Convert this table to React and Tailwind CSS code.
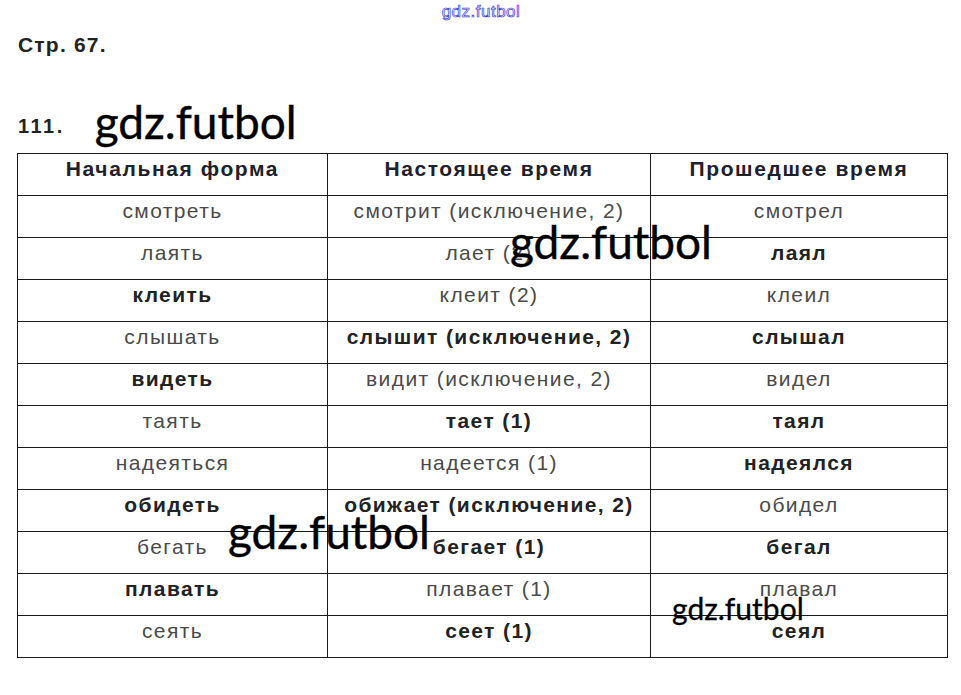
const rows = [
  [['смотреть', false], ['смотрит (исключение, 2)', false], ['смотрел', false]],
  [['лаять', false], ['лает (2)', false], ['лаял', true]],
  [['клеить', true], ['клеит (2)', false], ['клеил', false]],
  [['слышать', false], ['слышит (исключение, 2)', true], ['слышал', true]],
  [['видеть', true], ['видит (исключение, 2)', false], ['видел', false]],
  [['таять', false], ['тает (1)', true], ['таял', true]],
  [['надеяться', false], ['надеется (1)', false], ['надеялся', true]],
  [['обидеть', true], ['обижает (исключение, 2)', true], ['обидел', false]],
  [['бегать', false], ['бегает (1)', true], ['бегал', true]],
  [['плавать', true], ['плавает (1)', false], ['плавал', false]],
  [['сеять', false], ['сеет (1)', true], ['сеял', true]],
];

const heads = ['Начальная форма', 'Настоящее время', 'Прошедшее время'];

function Mark({ className }) {
  return (
    <span className={`absolute leading-none text-black font-['Lato',sans-serif] ${className}`}>
      gdz.futbol
    </span>
  );
}

export default function App() {
  return (
    <div className="relative w-[961px] h-[695px] bg-white font-['Liberation_Sans',Arial,sans-serif] overflow-hidden">
      <div className="flex justify-center pt-[3px]">
        <span className="ml-[1px] text-[17px] leading-none text-transparent [-webkit-text-stroke:0.7px_#3434d8] tracking-[0.5px]">
          gdz.futbol
        </span>
      </div>

      <div className="pl-[18px] pt-[14px] text-[21px] font-bold text-[#222] tracking-[1.2px] leading-none">
        Стр. 67.
      </div>

      <div className="flex items-end pl-[18px] h-[91px]">
        <span className="text-[20px] font-semibold text-[#222] tracking-[2.5px] leading-none mb-[10px]">111.</span>
        <span className="ml-[30px] text-[46px] leading-none text-black font-['Lato',sans-serif] mb-[1px] [-webkit-text-stroke:0.4px_#000]">
          gdz.futbol
        </span>
      </div>

      <table className="ml-[17px] mt-[7px] w-[930px] border-collapse table-fixed">
        <colgroup>
          <col className="w-[310px]" />
          <col className="w-[323px]" />
          <col className="w-[297px]" />
        </colgroup>
        <thead>
          <tr>
            {heads.map((h) => (
              <th
                key={h}
                className="h-[42px] border border-[#1a1a1a] align-top pt-[2px] text-[21px] leading-[25px] font-bold text-[#20202a] tracking-[1.6px]"
              >
                {h}
              </th>
            ))}
          </tr>
        </thead>
        <tbody>
          {rows.map((r, i) => (
            <tr key={i}>
              {r.map(([t, b], j) => (
                <td
                  key={j}
                  className={`h-[42px] border border-[#1a1a1a] align-top pt-[2px] text-center text-[21px] leading-[25px] tracking-[1.4px] ${
                    b ? 'font-bold text-[#222]' : 'text-[#4a4a4a]'
                  }`}
                >
                  {t}
                </td>
              ))}
            </tr>
          ))}
        </tbody>
      </table>

      <Mark className="left-[510px] top-[219px] text-[46px] [-webkit-text-stroke:0.4px_#000]" />
      <Mark className="left-[228px] top-[509px] text-[46px] [-webkit-text-stroke:0.4px_#000]" />
      <Mark className="left-[672px] top-[593px] text-[30px] [-webkit-text-stroke:0.3px_#000]" />
    </div>
  );
}
